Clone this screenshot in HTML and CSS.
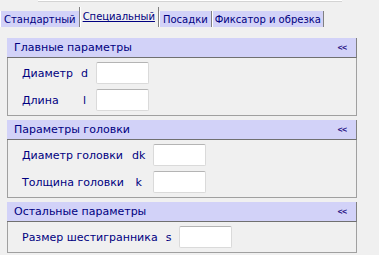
FILE: index.html
```html
<!DOCTYPE html>
<html lang="ru">
<head>
<meta charset="utf-8">
<link rel="stylesheet" href="styles.css">
</head>
<body>
<div class="topbar"></div>
<div class="tabs">
  <div class="tab">Стандартный</div>
  <div class="tab tab-active">Специальный</div>
  <div class="tab">Посадки</div>
  <div class="tab">Фиксатор и обрезка</div>
</div>
<div class="panels">
  <section class="panel">
    <div class="panel-head"><span>Главные параметры</span><span class="collapse">&lt;&lt;</span></div>
    <div class="panel-body">
      <span class="name">Диаметр</span><span class="sym">d</span><span class="field"></span>
      <span class="name">Длина</span><span class="sym">l</span><span class="field"></span>
    </div>
  </section>
  <section class="panel">
    <div class="panel-head"><span>Параметры головки</span><span class="collapse">&lt;&lt;</span></div>
    <div class="panel-body">
      <span class="name">Диаметр головки</span><span class="sym">dk</span><span class="field"></span>
      <span class="name">Толщина головки</span><span class="sym">k</span><span class="field"></span>
    </div>
  </section>
  <section class="panel">
    <div class="panel-head"><span>Остальные параметры</span><span class="collapse">&lt;&lt;</span></div>
    <div class="panel-body">
      <span class="name">Размер шестигранника</span><span class="sym">s</span><span class="field"></span>
    </div>
  </section>
</div>
</body>
</html>
```
FILE: styles.css
```css
html, body {
  margin: 0;
  padding: 0;
  background: #f0f0f0;
}
body {
  font-family: "DejaVu Sans", sans-serif;
  font-size: 11px;
  color: #000080;
  width: 379px;
  height: 255px;
  overflow: hidden;
}
.topbar {
  margin-left: 38px;
  width: 304px;
  height: 1px;
  background: #ffffff;
  border-bottom: 1px solid #d4d4d4;
}
.tabs {
  display: flex;
  align-items: flex-end;
  height: 20px;
  margin-top: 5px;
  font-size: 10px;
}
.tab {
  height: 16px;
  line-height: 17px;
  padding: 0 3px;
  background: #d2d2f8;
  border-left: 1px solid #ffffff;
  border-right: 1px solid #808080;
  white-space: nowrap;
}
.tab:has(+ .tab-active) {
  border-right: none;
}
.tab:last-child {
  padding: 0 2px;
}
.tab-active {
  height: 20px;
  line-height: 19px;
  padding: 0 3px;
  background: #f0f0f0;
  border-left: 1px solid #808080;
  box-shadow: inset 1px 0 #ffffff;
  text-decoration: underline;
}
.panels {
  margin: 11px 0 0 7px;
  width: 350px;
  display: flex;
  flex-direction: column;
  gap: 4px;
}
.panel-head {
  height: 19px;
  display: flex;
  align-items: center;
  justify-content: space-between;
  padding: 0 9px 0 7px;
  background: #d2d2f8;
  border-right: 1px solid #808080;
  border-bottom: 1px solid #707070;
}
.collapse {
  font-family: "Liberation Sans", sans-serif;
  font-size: 8px;
  color: #1a0a80;
  -webkit-text-stroke: 0.3px #1a0a80;
}
.panel-body {
  display: grid;
  grid-template-columns: auto auto 53px;
  column-gap: 8px;
  row-gap: 5px;
  justify-content: start;
  align-items: center;
  padding: 4px 0 4px 14px;
  border: 1px solid #a0a0a0;
  border-top: none;
}
.sym {
  text-align: center;
}
.field {
  display: block;
  height: 22px;
  box-sizing: border-box;
  background: #ffffff;
  border: 1px solid #dadada;
  border-top-color: #b4b4b4;
  border-radius: 2px;
}
```
